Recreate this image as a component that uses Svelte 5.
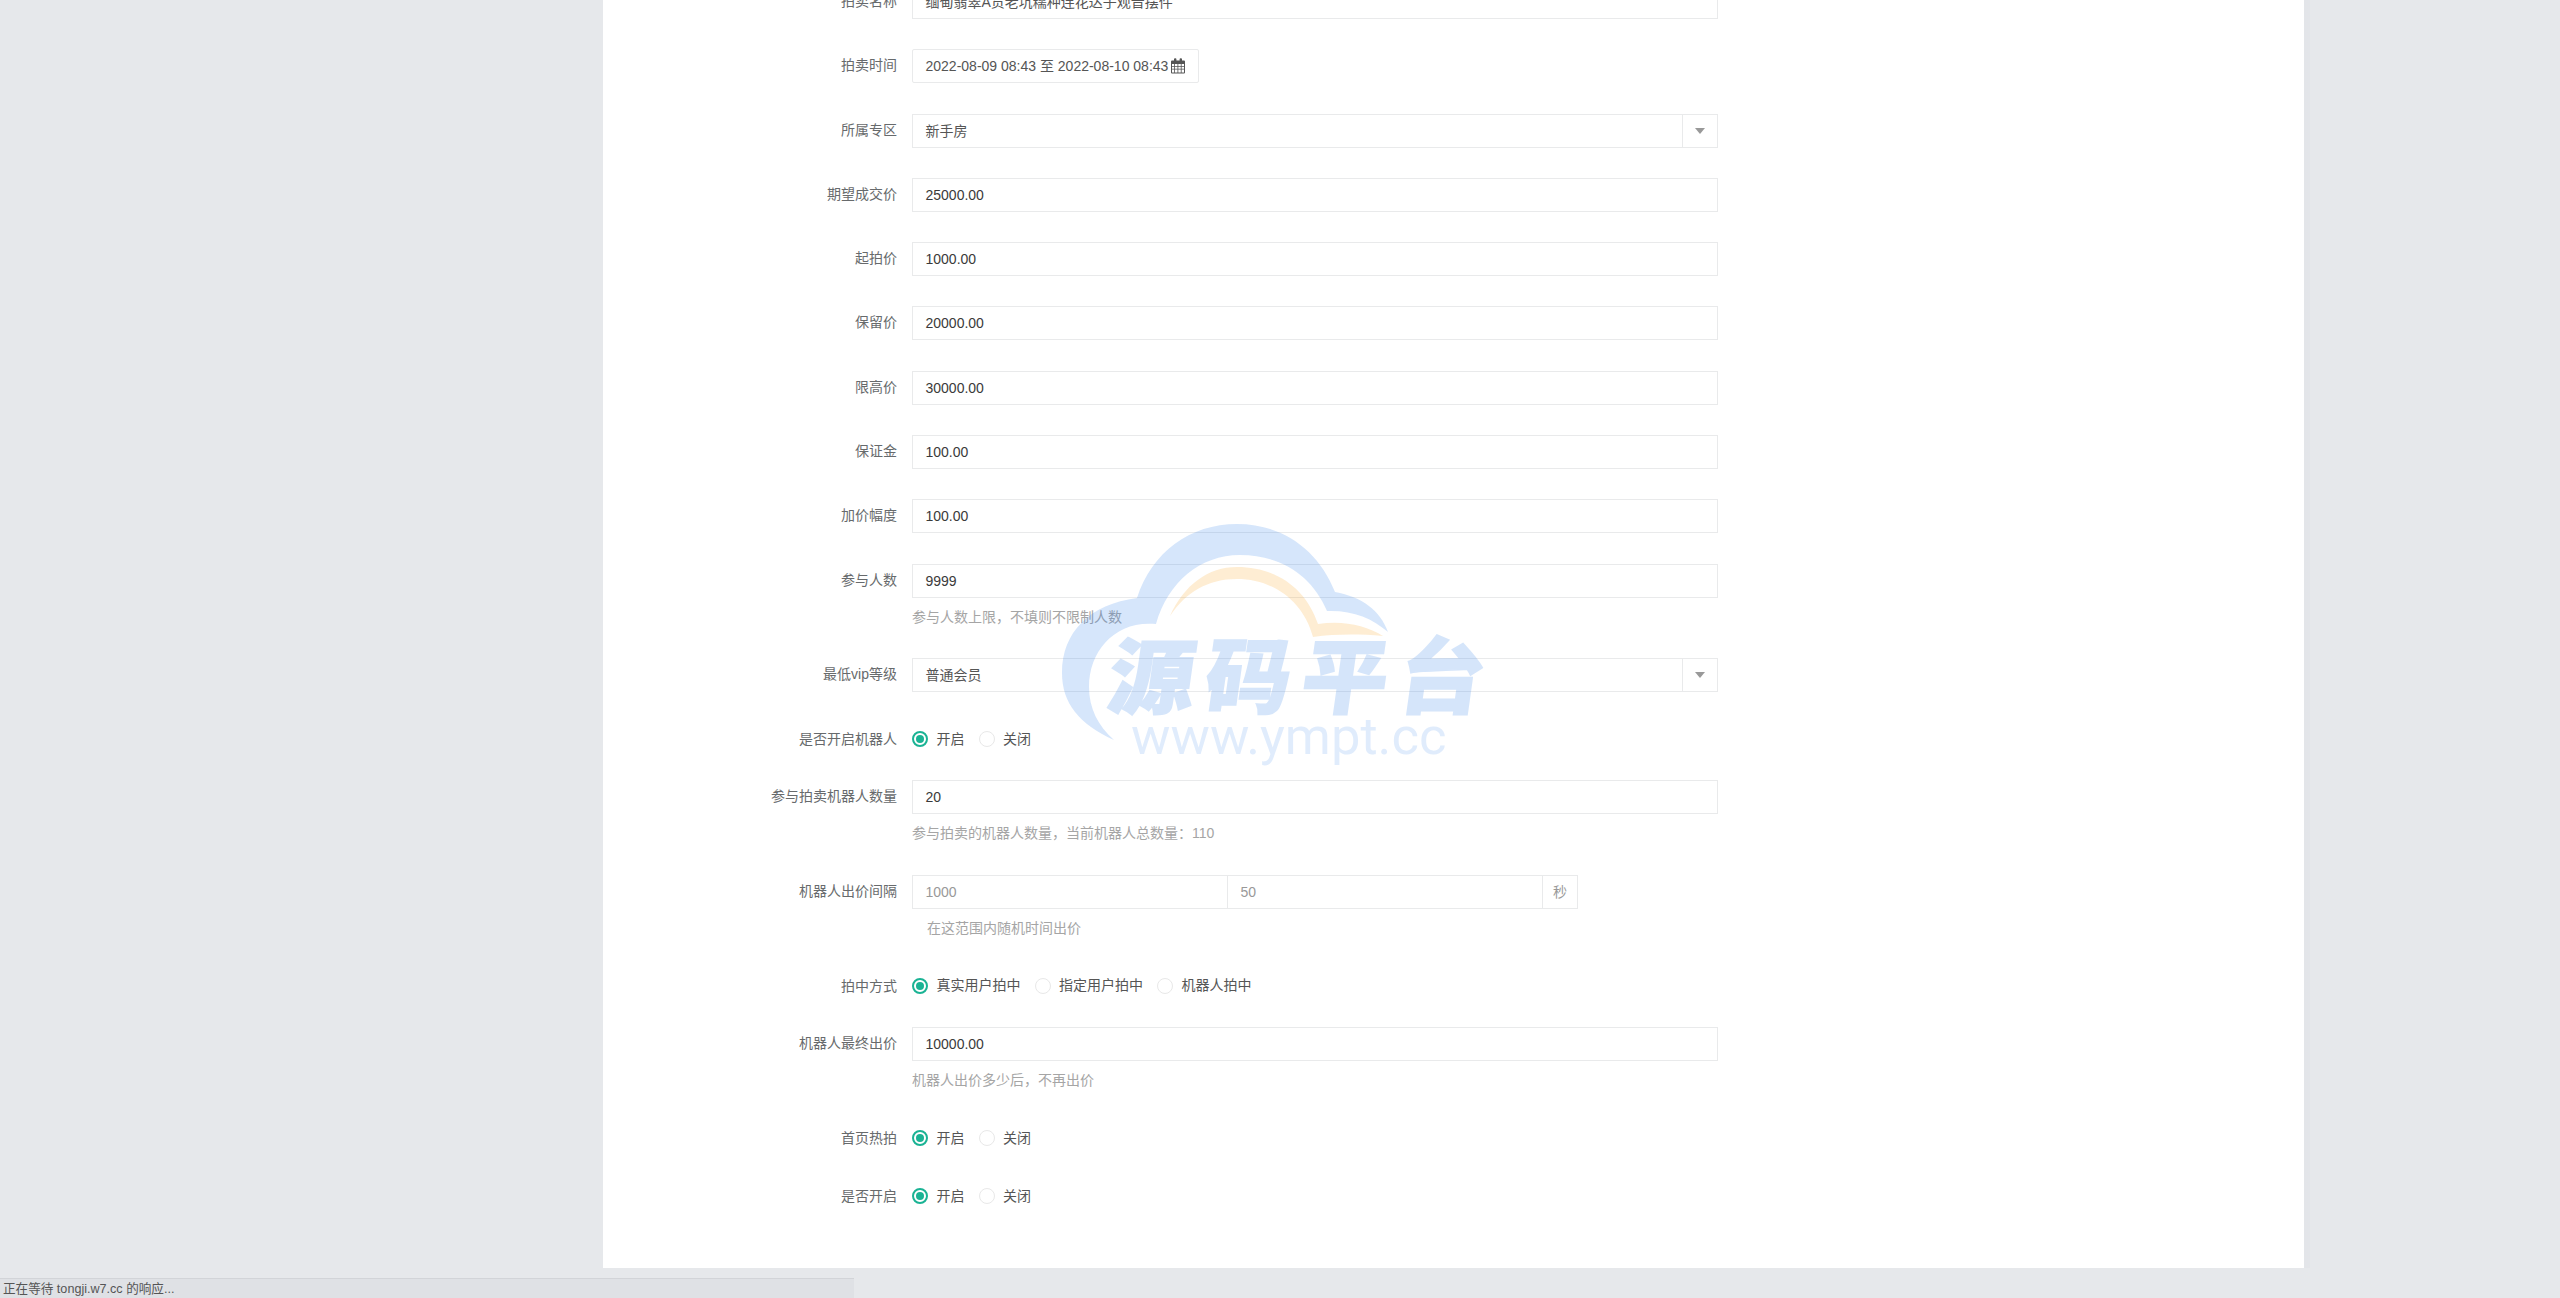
<script>
  // 拍卖编辑表单
  const priceRows = [
    { label: '期望成交价', value: '25000.00' },
    { label: '起拍价', value: '1000.00' },
    { label: '保留价', value: '20000.00' },
    { label: '限高价', value: '30000.00' },
    { label: '保证金', value: '100.00' },
    { label: '加价幅度', value: '100.00' }
  ];

  let robot = 'on';
  let winMode = 'real';
  let hot = 'on';
  let enabled = 'on';

  const onOff = [
    { value: 'on', text: '开启' },
    { value: 'off', text: '关闭' }
  ];
  const winModes = [
    { value: 'real', text: '真实用户拍中' },
    { value: 'user', text: '指定用户拍中' },
    { value: 'robot', text: '机器人拍中' }
  ];
</script>

<div class="page">
  <div class="card">
    <form class="form">
      <div class="row">
        <span class="label">拍卖名称</span>
        <div class="input">缅甸翡翠A货老坑糯种连花达子观音摆件</div>
      </div>

      <div class="row">
        <span class="label">拍卖时间</span>
        <div class="input date">
          <span>2022-08-09 08:43 至 2022-08-10 08:43</span>
          <svg class="cal" viewBox="0 0 14 16" width="14" height="16" aria-hidden="true">
            <path fill="#555" fill-rule="evenodd" d="M1 2.5h2V1.2a1 1 0 0 1 1-1h.4a1 1 0 0 1 1 1v1.3h3.2V1.2a1 1 0 0 1 1-1h.4a1 1 0 0 1 1 1v1.3h2a1 1 0 0 1 1 1v11a1 1 0 0 1-1 1H1a1 1 0 0 1-1-1v-11a1 1 0 0 1 1-1zM1 6v2h2.2V6zm3 0v2h2.5V6zm3.3 0v2h2.5V6zm3.3 0v2H13V6zM1 8.8v2h2.2v-2zm3 0v2h2.5v-2zm3.3 0v2h2.5v-2zm3.3 0v2H13v-2zM1 11.6v2.9h2.2v-2.9zm3 0v2.9h2.5v-2.9zm3.3 0v2.9h2.5v-2.9zm3.3 0v2.9H13v-2.9z"/>
          </svg>
        </div>
      </div>

      <div class="row">
        <span class="label">所属专区</span>
        <div class="input select">
          <span class="select-text">新手房</span>
          <span class="select-arrow"><i></i></span>
        </div>
      </div>

      {#each priceRows as r}
        <div class="row">
          <span class="label">{r.label}</span>
          <div class="input strong">{r.value}</div>
        </div>
      {/each}

      <div class="row">
        <span class="label">参与人数</span>
        <div>
          <div class="input strong">9999</div>
          <p class="hint">参与人数上限，不填则不限制人数</p>
        </div>
      </div>

      <div class="row">
        <span class="label">最低vip等级</span>
        <div class="input select">
          <span class="select-text">普通会员</span>
          <span class="select-arrow"><i></i></span>
        </div>
      </div>

      <div class="row radio-row">
        <span class="label">是否开启机器人</span>
        <div class="radios">
          {#each onOff as o}
            <label class="radio" class:checked={robot === o.value}>
              <input type="radio" bind:group={robot} value={o.value} /><span class="dot"></span>{o.text}
            </label>
          {/each}
        </div>
      </div>

      <div class="row">
        <span class="label">参与拍卖机器人数量</span>
        <div>
          <div class="input strong">20</div>
          <p class="hint">参与拍卖的机器人数量，当前机器人总数量：110</p>
        </div>
      </div>

      <div class="row">
        <span class="label">机器人出价间隔</span>
        <div>
          <div class="group">
            <span class="cell wide">1000</span>
            <span class="cell wide">50</span>
            <span class="cell unit">秒</span>
          </div>
          <p class="hint indent">在这范围内随机时间出价</p>
        </div>
      </div>

      <div class="row radio-row mode">
        <span class="label">拍中方式</span>
        <div class="radios">
          {#each winModes as o}
            <label class="radio" class:checked={winMode === o.value}>
              <input type="radio" bind:group={winMode} value={o.value} /><span class="dot"></span>{o.text}
            </label>
          {/each}
        </div>
      </div>

      <div class="row">
        <span class="label">机器人最终出价</span>
        <div>
          <div class="input strong">10000.00</div>
          <p class="hint">机器人出价多少后，不再出价</p>
        </div>
      </div>

      <div class="row radio-row">
        <span class="label">首页热拍</span>
        <div class="radios">
          {#each onOff as o}
            <label class="radio" class:checked={hot === o.value}>
              <input type="radio" bind:group={hot} value={o.value} /><span class="dot"></span>{o.text}
            </label>
          {/each}
        </div>
      </div>

      <div class="row radio-row">
        <span class="label">是否开启</span>
        <div class="radios">
          {#each onOff as o}
            <label class="radio" class:checked={enabled === o.value}>
              <input type="radio" bind:group={enabled} value={o.value} /><span class="dot"></span>{o.text}
            </label>
          {/each}
        </div>
      </div>
    </form>
  </div>

  <!-- 水印 -->
  <div class="watermark">
    <svg viewBox="1050 515 450 260" width="450" height="260" aria-hidden="true">
      <path fill="rgba(50,130,235,.2)" d="M1114 740C1079 724 1062 703 1062 673C1062 632 1090 604 1137 598C1152 552 1190 524 1237 524C1282 524 1318 549 1335 592C1362 597 1380 610 1388 632C1372 618 1352 610 1327 611C1312 575 1280 555 1240 555C1200 555 1168 582 1156 624C1116 620 1089 650 1089 687C1089 708 1098 726 1114 740Z"/>
      <path fill="rgba(250,165,35,.2)" d="M1170 616C1184 585 1208 567 1237 567C1276 567 1306 588 1318 624C1342 620 1366 625 1383 636C1358 634 1336 634 1313 637C1303 600 1272 579 1237 579C1208 579 1186 592 1170 616Z"/>
    </svg>
    <div class="wm-cn">源码平台</div>
    <div class="wm-en">www.ympt.cc</div>
  </div>

  <div class="status">正在等待 tongji.w7.cc 的响应...</div>
</div>

<style>
  :global(body) {
    margin: 0;
    background: #e6e8eb;
  }

  .page {
    position: relative;
    height: 1298px;
    overflow: hidden;
    background: #e6e8eb;
    font-family: "Liberation Sans", "Noto Sans CJK SC", sans-serif;
    font-size: 14px;
    color: #676a6c;
  }

  /* 第一行被页面滚动裁掉一部分 */
  .card {
    box-sizing: border-box;
    width: 1701px;
    height: 1268px;
    margin-left: 603px;
    overflow: hidden;
    background: #fff;
    box-shadow: 6px 0 0 #e3e5e9;
  }

  .form {
    margin: -15px 0 0;
  }

  .row {
    display: grid;
    grid-template-columns: 294px 806px;
    column-gap: 15px;
    margin-bottom: 30.3px;
  }

  .label {
    text-align: right;
    line-height: 33px;
    white-space: nowrap;
  }

  .input {
    box-sizing: border-box;
    height: 34px;
    line-height: 32px;
    padding: 0 12.5px;
    border: 1px solid #e9eaeb;
    color: #555;
    white-space: nowrap;
  }

  .strong {
    color: #3a3a3a;
  }

  .date {
    display: flex;
    align-items: center;
    gap: 3px;
    width: 287px;
    border-radius: 2px;
  }

  .cal {
    flex: none;
  }

  .select {
    display: flex;
    padding-right: 0;
  }

  .select-text {
    flex: 1;
  }

  .select-arrow {
    display: flex;
    align-items: center;
    justify-content: center;
    width: 34px;
    border-left: 1px solid #e9eaeb;
  }

  .select-arrow i {
    width: 0;
    height: 0;
    border-left: 5px solid transparent;
    border-right: 5px solid transparent;
    border-top: 6px solid #999;
  }

  .hint {
    margin: 9px 0 1px;
    line-height: 20px;
    color: #a5a5a5;
    white-space: nowrap;
  }

  .hint.indent {
    padding-left: 15px;
  }

  .group {
    display: flex;
    width: 666px;
    height: 34px;
    box-sizing: border-box;
    border: 1px solid #e9eaeb;
    color: #999;
  }

  .cell {
    box-sizing: border-box;
    line-height: 32px;
    padding-left: 12.5px;
    border-right: 1px solid #e9eaeb;
  }

  .cell.wide {
    width: 315px;
  }

  .cell.unit {
    flex: 1;
    border-right: none;
    padding-left: 10px;
  }

  .radio-row {
    margin-bottom: 30px;
  }

  .radio-row .label {
    line-height: 20px;
    padding-top: 7px;
  }

  .radio-row.mode {
    margin-top: 1.3px;
  }

  .radios {
    display: flex;
    gap: 14px;
    height: 28px;
    padding-top: 7px;
    box-sizing: border-box;
  }

  .radio {
    display: flex;
    align-items: center;
    gap: 8.5px;
    height: 20px;
    line-height: 19px;
    color: #555;
  }

  .radio input {
    display: none;
  }

  .dot {
    position: relative;
    box-sizing: border-box;
    width: 16px;
    height: 16px;
    border-radius: 50%;
    border: 1px solid #e8e8e8;
    background: #fff;
  }

  .checked .dot {
    border: 2px solid #1ab394;
  }

  .checked .dot::after {
    content: "";
    position: absolute;
    left: 2px;
    top: 2px;
    width: 8px;
    height: 8px;
    border-radius: 50%;
    background: #1ab394;
  }

  .watermark {
    position: absolute;
    left: 1050px;
    top: 515px;
    width: 450px;
    height: 260px;
    pointer-events: none;
  }

  .watermark svg {
    position: absolute;
    left: 0;
    top: 0;
  }

  .wm-cn {
    position: absolute;
    left: 60px;
    top: 107px;
    font-family: "Noto Sans CJK SC", sans-serif;
    font-weight: 900;
    font-size: 82px;
    line-height: 100px;
    letter-spacing: 10px;
    white-space: nowrap;
    transform-origin: left center;
    transform: skewX(-8deg) scaleX(1.05);
    color: rgb(50, 130, 235);
    -webkit-text-stroke: 1.5px rgb(50, 130, 235);
    opacity: .2;
  }

  .wm-en {
    position: absolute;
    left: 81px;
    top: 186px;
    font-family: Roboto, sans-serif;
    font-weight: 400;
    font-size: 52.5px;
    line-height: 70px;
    white-space: nowrap;
    color: rgba(50, 130, 235, .15);
  }

  .status {
    position: absolute;
    left: 0;
    bottom: 0;
    box-sizing: border-box;
    width: 854px;
    height: 20px;
    padding-left: 3px;
    line-height: 20px;
    font-size: 12.6px;
    color: #555;
    background: #dfe1e5;
    border-top: 1px solid #d2d4d8;
  }
</style>
